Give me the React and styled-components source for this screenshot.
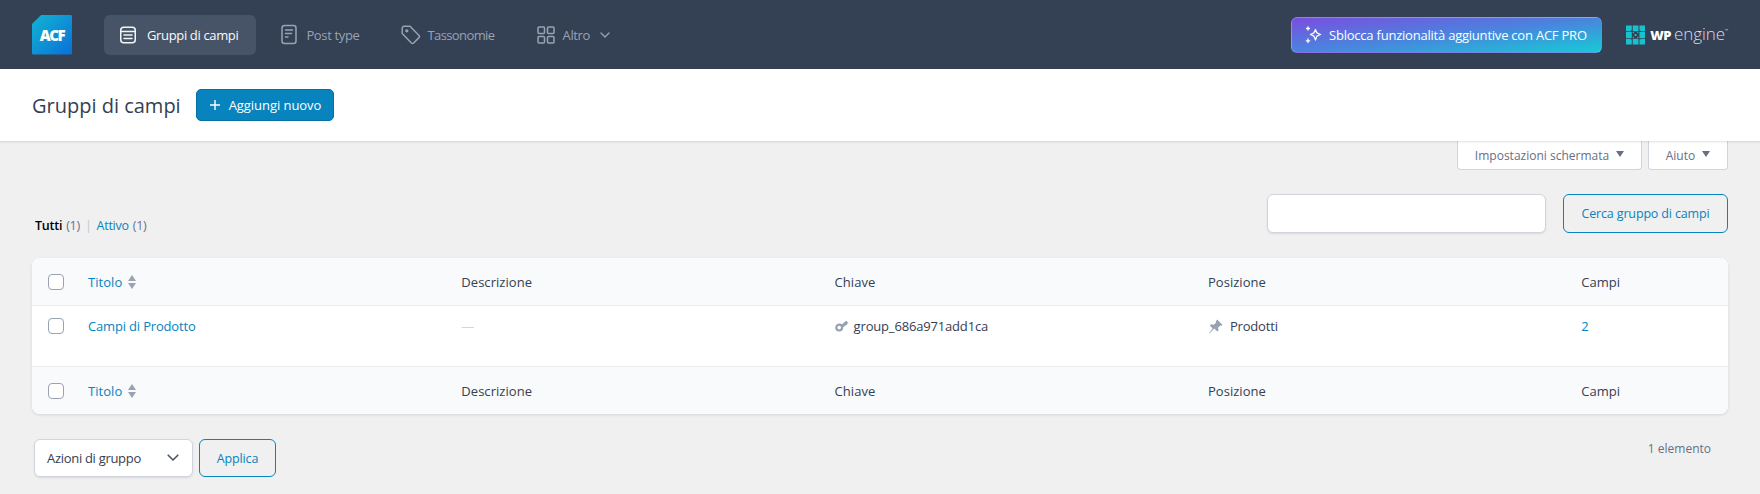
import React from "react";
import styled, { createGlobalStyle } from "styled-components";

const GlobalStyle = createGlobalStyle`
  html, body {
    margin: 0;
    padding: 0;
    background: #f0f0f1;
  }
  body {
    font-family: "Open Sans", "Noto Sans", "Liberation Sans", sans-serif;
    font-size: 13px;
    color: #344054;
  }
  * {
    box-sizing: border-box;
  }
`;

const Page = styled.div`
  width: 1760px;
  height: 494px;
  overflow: hidden;
`;

/* top navigation */
const Header = styled.header`
  height: 69px;
  background: #344054;
  padding: 0 32px;
  display: flex;
  align-items: center;
`;
const AcfLogo = styled.div`
  width: 40px;
  height: 40px;
  background: linear-gradient(135deg, #12b5d3 0%, #0a6fd8 100%);
  clip-path: polygon(24% 0, 97% 0, 100% 3%, 100% 97%, 97% 100%, 3% 100%, 0 97%, 0 24%);
  display: flex;
  align-items: center;
  justify-content: center;
  color: #fff;
  font-weight: 800;
  font-size: 15px;
  letter-spacing: -1.4px;
  margin-right: 32px;
`;
const Nav = styled.nav`
  display: flex;
  align-items: center;
  flex: 1;
`;
const NavItem = styled.a`
  display: flex;
  align-items: center;
  height: 40px;
  border-radius: 6px;
  padding: ${(p) => p.$pad || "0"};
  margin-right: ${(p) => p.$gap || "0"};
  gap: ${(p) => p.$iconGap || "8px"};
  color: ${(p) => (p.$active ? "#f9fafb" : "#98a2b3")};
  background: ${(p) => (p.$active ? "#475467" : "transparent")};
  font-size: 13px;
  letter-spacing: ${(p) => p.$ls || "-0.35px"};
  svg {
    flex: none;
  }
`;
const NavChevron = styled.span`
  display: flex;
  margin-left: 2px;
`;
const Upsell = styled.a`
  width: 311px;
  height: 36px;
  border-radius: 6px;
  border: 1px solid rgba(255, 255, 255, 0.16);
  background: linear-gradient(to bottom right, #7a4ee0 0%, #4a84dd 50%, #15cbd6 100%);
  color: #fff;
  font-size: 13px;
  letter-spacing: -0.22px;
  display: flex;
  align-items: center;
  gap: 6px;
  padding-left: 13px;
`;
const WpEngine = styled.div`
  display: flex;
  align-items: center;
  margin-left: 24px;
  width: 102px;
  height: 20px;
  color: #fff;
`;
const WpBold = styled.span`
  font-weight: 800;
  font-size: 13px;
  margin-left: 5px;
  letter-spacing: -0.4px;
  line-height: 20px;
`;
const WpLight = styled.span`
  font-weight: 300;
  font-size: 17px;
  margin-left: 3px;
  line-height: 20px;
  letter-spacing: -0.1px;
  color: #d9dde5;
  position: relative;
  top: -1px;
`;
const WpMark = styled.sup`
  font-size: 4px;
  line-height: 4px;
  color: #d9dde5;
  align-self: flex-start;
  margin-top: 4px;
`;

/* title bar */
const TitleBar = styled.div`
  height: 72px;
  background: #fff;
  padding: 0 32px;
  display: flex;
  align-items: center;
  gap: 15px;
  box-shadow: 0 1px 2px rgba(16, 24, 40, 0.13);
  position: relative;
`;
const Title = styled.h1`
  margin: 0;
  font-size: 20px;
  font-weight: 400;
  color: #344054;
`;
const PrimaryButton = styled.a`
  width: 138px;
  height: 32px;
  background: #0783be;
  border: 1px solid #0670a3;
  border-radius: 5px;
  color: #fff;
  font-size: 13px;
  letter-spacing: -0.05px;
  display: flex;
  align-items: center;
  gap: 8px;
  padding-left: 12px;
`;

/* screen option tabs */
const TabBar = styled.div`
  display: flex;
  justify-content: flex-end;
  gap: 6px;
  padding: 0 32px;
  height: 29px;
`;
const TabButton = styled.button`
  width: ${(p) => p.$w};
  height: 29px;
  background: #fff;
  border: 1px solid #d0d5dd;
  border-top: none;
  border-radius: 0 0 4px 4px;
  font: inherit;
  font-size: 12px;
  letter-spacing: 0;
  color: #667085;
  display: flex;
  align-items: center;
  justify-content: center;
  gap: 7px;
  padding: 0;
  &::after {
    content: "";
    border-left: 4px solid transparent;
    border-right: 4px solid transparent;
    border-top: 6px solid #667085;
    margin-top: -3px;
  }
`;

/* filters */
const FilterRow = styled.div`
  display: flex;
  justify-content: space-between;
  padding: 24px 32px 0;
  height: 88px;
`;
const Views = styled.div`
  display: flex;
  align-items: center;
  height: 16px;
  margin-top: 23px;
  padding-left: 3px;
  font-size: 12.5px;
  letter-spacing: -0.25px;
  color: #667085;
  gap: 4px;
`;
const ViewCurrent = styled.strong`
  color: #000;
  font-weight: 600;
`;
const ViewLink = styled.a`
  color: #0783be;
`;
const Separator = styled.span`
  color: #c0c5cf;
  margin: 0 1px;
`;
const SearchBox = styled.div`
  display: flex;
  gap: 17px;
`;
const SearchInput = styled.input`
  width: 279px;
  height: 39px;
  background: #fff;
  border: 1px solid #d0d5dd;
  border-radius: 6px;
  box-shadow: 0 1px 2px rgba(16, 24, 40, 0.1);
`;
const OutlineButton = styled.button`
  width: ${(p) => p.$w};
  height: ${(p) => p.$h || "39px"};
  background: transparent;
  border: 1px solid #0783be;
  border-radius: 6px;
  color: #0783be;
  font: inherit;
  font-size: 12.5px;
  letter-spacing: -0.15px;
  padding: 0;
`;

/* table */
const Card = styled.div`
  margin: 0 32px;
  border-radius: 8px;
  overflow: hidden;
  background: #fff;
  box-shadow: 0 1px 3px rgba(16, 24, 40, 0.12);
`;
const Row = styled.div`
  display: grid;
  grid-template-columns: 56px repeat(4, 373.3px) 1fr;
  height: ${(p) => p.$h};
  background: ${(p) => (p.$head ? "#f9fafb" : "#fff")};
  border-top: ${(p) => (p.$line ? "1px solid #eaecf0" : "none")};
  padding-top: ${(p) => p.$top || "0"};
  align-items: ${(p) => (p.$head ? "center" : "start")};
  font-size: 13px;
  letter-spacing: ${(p) => (p.$head ? "0.05px" : "-0.17px")};
`;
const CheckCell = styled.div`
  padding-left: 16px;
  height: 16px;
`;
const Check = styled.span`
  display: block;
  width: 16px;
  height: 16px;
  background: #fff;
  border: 1px solid #98a2b3;
  border-radius: 4px;
`;
const Cell = styled.div`
  display: flex;
  align-items: center;
  gap: ${(p) => p.$gap || "6px"};
  height: 16px;
  color: ${(p) => (p.$muted ? "#d0d5dd" : "#344054")};
`;
const CellLink = styled.a`
  color: #0783be;
`;
const SortIcon = styled.span`
  display: flex;
  flex-direction: column;
  gap: 2px;
  &::before,
  &::after {
    content: "";
    border-left: 4.5px solid transparent;
    border-right: 4.5px solid transparent;
  }
  &::before {
    border-bottom: 6px solid #98a2b3;
  }
  &::after {
    border-top: 6px solid #98a2b3;
  }
`;

/* bottom actions */
const BottomBar = styled.div`
  display: flex;
  padding: 25px 32px 0 34px;
  gap: 6px;
`;
const SelectBox = styled.div`
  width: 159px;
  height: 38px;
  background: #fff;
  border: 1px solid #d0d5dd;
  border-radius: 6px;
  box-shadow: 0 1px 2px rgba(16, 24, 40, 0.1);
  display: flex;
  align-items: center;
  justify-content: space-between;
  padding: 0 13px 0 12px;
  font-size: 13px;
  letter-spacing: -0.3px;
  color: #344054;
`;
const PageCount = styled.div`
  margin-left: auto;
  padding: 0 17px 0 0;
  margin-top: 1px;
  font-size: 12px;
  letter-spacing: 0;
  color: #667085;
`;

const GroupsIcon = () => (
  <svg width="18" height="20" viewBox="0 0 18 20" fill="none" stroke="#f2f4f7" strokeWidth="1.5" strokeLinecap="round">
    <rect x="1.75" y="2.25" width="14.5" height="15.5" rx="3" />
    <path d="M2 6.5h14M5 10h8M5 13.5h8" />
  </svg>
);

const PostIcon = () => (
  <svg width="16" height="21" viewBox="0 0 16 21" fill="none" stroke="#98a2b3" strokeWidth="1.5" strokeLinecap="round">
    <rect x="1" y="1.5" width="14" height="18" rx="2.5" />
    <path d="M4.5 6h7M4.5 9.5h6M4.5 13h2.5" />
  </svg>
);

const TagIcon = () => (
  <svg width="20" height="20" viewBox="0 0 20 20" fill="none" stroke="#98a2b3" strokeWidth="1.5" strokeLinejoin="round">
    <path d="M1.2 3.2a2 2 0 0 1 2-2H9l9 9.2a1.6 1.6 0 0 1 0 2.2l-5.4 5.4a1.6 1.6 0 0 1-2.2 0L1.2 8.6z" />
    <circle cx="5.8" cy="5.8" r="0.9" />
  </svg>
);

const GridIcon = () => (
  <svg width="18" height="18" viewBox="0 0 18 18" fill="none" stroke="#98a2b3" strokeWidth="1.5">
    <rect x="1" y="1" width="6.5" height="6.5" rx="1" />
    <rect x="10.5" y="1" width="6.5" height="6.5" rx="1" />
    <rect x="1" y="10.5" width="6.5" height="6.5" rx="1" />
    <rect x="10.5" y="10.5" width="6.5" height="6.5" rx="1" />
  </svg>
);

const Chevron = ({ color = "#98a2b3", w = 10 }) => (
  <svg width={w} height={w * 0.6} viewBox="0 0 10 6" fill="none" stroke={color} strokeWidth="1.3" strokeLinecap="round" strokeLinejoin="round">
    <path d="M1 1l4 4 4-4" />
  </svg>
);

const SparkIcon = () => (
  <svg width="18" height="18" viewBox="0 0 18 18" fill="none" stroke="#fff" strokeWidth="1.3" strokeLinejoin="round" strokeLinecap="round">
    <path d="M10.5 3.5l1.4 3.4 3.6 1.6-3.6 1.6-1.4 3.9-1.6-3.9-3.4-1.6 3.4-1.6z" />
    <path d="M3 1v3M1.5 2.5h3M3 13v3.5M1.3 14.8h3.4" />
  </svg>
);

const PlusIcon = () => (
  <svg width="12" height="12" viewBox="0 0 12 12" fill="none" stroke="#fff" strokeWidth="1.4">
    <path d="M6 1v10M1 6h10" />
  </svg>
);

const WpGrid = () => (
  <svg width="20" height="20" viewBox="0 0 20 20">
    <path
      fill="#14c3ce"
      d="M0 0h6v6H0zM7 0h6v6H7zM14 0h6v6h-6zM0 7h6v6H0zM14 7h6v6h-6zM0 14h6v6H0zM7 14h6v6H7zM14 14h6v6h-6zM9 9h2v2H9z"
    />
    <path fill="#344054" d="M5 5h1v1H5zM14 5h1v1h-1zM5 14h1v1H5zM14 14h1v1h-1z" />
    <path fill="#14c3ce" d="M7 7h1.2v1.2H7zM11.8 7H13v1.2h-1.2zM7 11.8h1.2V13H7zM11.8 11.8H13V13h-1.2z" />
  </svg>
);

const KeyIcon = () => (
  <svg width="14" height="12" viewBox="0 0 14 12" fill="none">
    <circle cx="4.2" cy="7.6" r="2.9" stroke="#98a2b3" strokeWidth="2.2" />
    <path d="M6 5.2L11 .8l2.4 2-1.2 1-.3 1.4-1.5.1-.6 1-2.4 1.3z" fill="#98a2b3" />
  </svg>
);

const PinIcon = () => (
  <svg width="15" height="15" viewBox="0 0 15 15" fill="#98a2b3">
    <path d="M9.2.6l5.2 5.2-1.1 1.1-1-.5-2.3 2.3.6 2.7-1.3 1.2-3-3-4.3 4.3L1 14.3l3.7-4.8-2.9-3 1.2-1.3 2.8.6 2.3-2.3-.4-1z" />
  </svg>
);

const HeadCells = () => (
  <>
    <CheckCell>
      <Check />
    </CheckCell>
    <Cell>
      <CellLink>Titolo</CellLink>
      <SortIcon />
    </Cell>
    <Cell>Descrizione</Cell>
    <Cell>Chiave</Cell>
    <Cell>Posizione</Cell>
    <Cell>Campi</Cell>
  </>
);

const App = () => {
  return (
    <Page>
      <GlobalStyle />
      <Header>
        <AcfLogo>ACF</AcfLogo>
        <Nav>
          <NavItem $active $pad="0 18px 0 15px" $iconGap="10px" $gap="25px">
            <GroupsIcon />
            Gruppi di campi
          </NavItem>
          <NavItem $iconGap="9px" $gap="41px">
            <PostIcon />
            Post type
          </NavItem>
          <NavItem $iconGap="7px" $gap="42px" $ls="-0.6px">
            <TagIcon />
            Tassonomie
          </NavItem>
          <NavItem $iconGap="8px">
            <GridIcon />
            Altro
            <NavChevron>
              <Chevron />
            </NavChevron>
          </NavItem>
        </Nav>
        <Upsell>
          <SparkIcon />
          Sblocca funzionalità aggiuntive con ACF PRO
        </Upsell>
        <WpEngine>
          <WpGrid />
          <WpBold>WP</WpBold>
          <WpLight>engine</WpLight>
          <WpMark>™</WpMark>
        </WpEngine>
      </Header>
      <TitleBar>
        <Title>Gruppi di campi</Title>
        <PrimaryButton>
          <PlusIcon />
          Aggiungi nuovo
        </PrimaryButton>
      </TitleBar>
      <TabBar>
        <TabButton $w="185px">Impostazioni schermata</TabButton>
        <TabButton $w="80px">Aiuto</TabButton>
      </TabBar>
      <FilterRow>
        <Views>
          <ViewCurrent>Tutti</ViewCurrent> (1)
          <Separator>|</Separator>
          <ViewLink>Attivo</ViewLink> (1)
        </Views>
        <SearchBox>
          <SearchInput />
          <OutlineButton $w="165px">Cerca gruppo di campi</OutlineButton>
        </SearchBox>
      </FilterRow>
      <Card>
        <Row $head $h="47px">
          <HeadCells />
        </Row>
        <Row $line $h="61px" $top="12px">
          <CheckCell>
            <Check />
          </CheckCell>
          <Cell>
            <CellLink>Campi di Prodotto</CellLink>
          </Cell>
          <Cell $muted>—</Cell>
          <Cell $gap="5px">
            <KeyIcon />
            group_686a971add1ca
          </Cell>
          <Cell $gap="7px">
            <PinIcon />
            Prodotti
          </Cell>
          <Cell>
            <CellLink>2</CellLink>
          </Cell>
        </Row>
        <Row $head $line $h="48px">
          <HeadCells />
        </Row>
      </Card>
      <BottomBar>
        <SelectBox>
          Azioni di gruppo
          <Chevron color="#475467" w={12} />
        </SelectBox>
        <OutlineButton $w="77px" $h="38px">Applica</OutlineButton>
        <PageCount>1 elemento</PageCount>
      </BottomBar>
    </Page>
  );
};

export default App;
